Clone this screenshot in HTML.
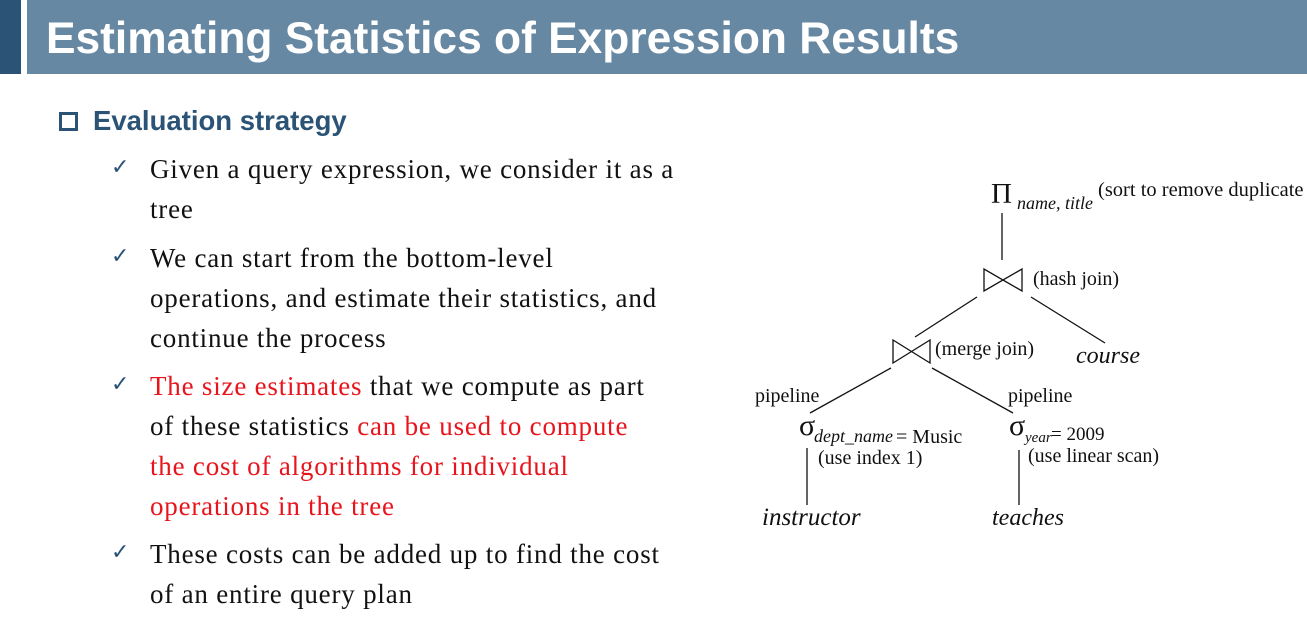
<!DOCTYPE html>
<html><head><meta charset="utf-8"><style>
body{margin:0;width:1307px;height:638px;background:#fff;position:relative;overflow:hidden;font-family:"Liberation Serif",serif}
.l{position:absolute;left:150px;font-size:27px;letter-spacing:0.8px;color:#111;white-space:nowrap;line-height:1}
.c{position:absolute;left:111px;font-size:22px;color:#2c5278;font-family:"DejaVu Sans",sans-serif;line-height:1;font-weight:bold}
.r{color:#e8141c}
svg text{font-family:"Liberation Serif",serif;fill:#111;stroke:none}
</style></head><body>
<div style="position:absolute;left:0;top:0;width:21px;height:74px;background:#2a5376"></div>
<div style="position:absolute;left:27px;top:0;width:1280px;height:74px;background:#6788a3"></div>
<div style="position:absolute;left:46px;top:17px;font:bold 44.3px 'Liberation Sans',sans-serif;color:#fff;line-height:1;white-space:nowrap">Estimating Statistics of Expression Results</div>
<div style="position:absolute;left:59px;top:112px;width:13px;height:13px;border:3px solid #2a5376"></div>
<div style="position:absolute;left:93px;top:107px;font:bold 27.5px 'Liberation Sans',sans-serif;color:#2a5376;line-height:1;white-space:nowrap">Evaluation strategy</div>

<div class="c" style="top:157px">✓</div>
<div class="l" style="top:156px">Given a query expression, we consider it as a</div>
<div class="l" style="top:196px">tree</div>
<div class="c" style="top:246px">✓</div>
<div class="l" style="top:245px">We can start from the bottom-level</div>
<div class="l" style="top:285px">operations, and estimate their statistics, and</div>
<div class="l" style="top:325px">continue the process</div>
<div class="c" style="top:374px">✓</div>
<div class="l" style="top:373px"><span class="r">The size estimates</span> that we compute as part</div>
<div class="l" style="top:413px">of these statistics <span class="r">can be used to compute</span></div>
<div class="l r" style="top:453px">the cost of algorithms for individual</div>
<div class="l r" style="top:493px">operations in the tree</div>
<div class="c" style="top:542px">✓</div>
<div class="l" style="top:541px">These costs can be added up to find the cost</div>
<div class="l" style="top:581px">of an entire query plan</div>

<svg width="1307" height="638" style="position:absolute;left:0;top:0" fill="none" stroke="#111" stroke-width="1.3">
<text x="991" y="203" font-size="29">Π</text>
<text x="1017" y="209" font-size="18" font-style="italic">name, title</text>
<text x="1098" y="196" font-size="20.5">(sort to remove duplicate</text>
<line x1="1002" y1="213" x2="1002" y2="260"/>
<path d="M984 269 L984 291 L1022 269 L1022 291 Z"/>
<text x="1033" y="285" font-size="20">(hash join)</text>
<line x1="977" y1="297" x2="915" y2="337"/>
<line x1="1031" y1="297" x2="1105" y2="343"/>
<path d="M893 340 L893 363 L930 340 L930 363 Z"/>
<text x="935" y="355" font-size="20">(merge join)</text>
<text x="1076" y="363" font-size="24" font-style="italic">course</text>
<line x1="891" y1="368" x2="810" y2="413"/>
<line x1="932" y1="368" x2="1013" y2="413"/>
<text x="755" y="402" font-size="20">pipeline</text>
<text x="1008" y="402" font-size="20">pipeline</text>
<text x="799" y="435" font-size="30">σ</text>
<text x="814" y="442" font-size="18" font-style="italic">dept_name</text>
<text x="896" y="443" font-size="20">= Music</text>
<text x="818" y="464" font-size="20">(use index 1)</text>
<line x1="807" y1="448" x2="807" y2="505"/>
<text x="762" y="525" font-size="25" font-style="italic">instructor</text>
<text x="1009" y="435" font-size="30">σ</text>
<text x="1025" y="442" font-size="15" font-style="italic">year</text>
<text x="1051" y="440" font-size="19">= 2009</text>
<text x="1028" y="462" font-size="20">(use linear scan)</text>
<line x1="1019" y1="450" x2="1019" y2="505"/>
<text x="992" y="525" font-size="24" font-style="italic">teaches</text>
</svg>
</body></html>
